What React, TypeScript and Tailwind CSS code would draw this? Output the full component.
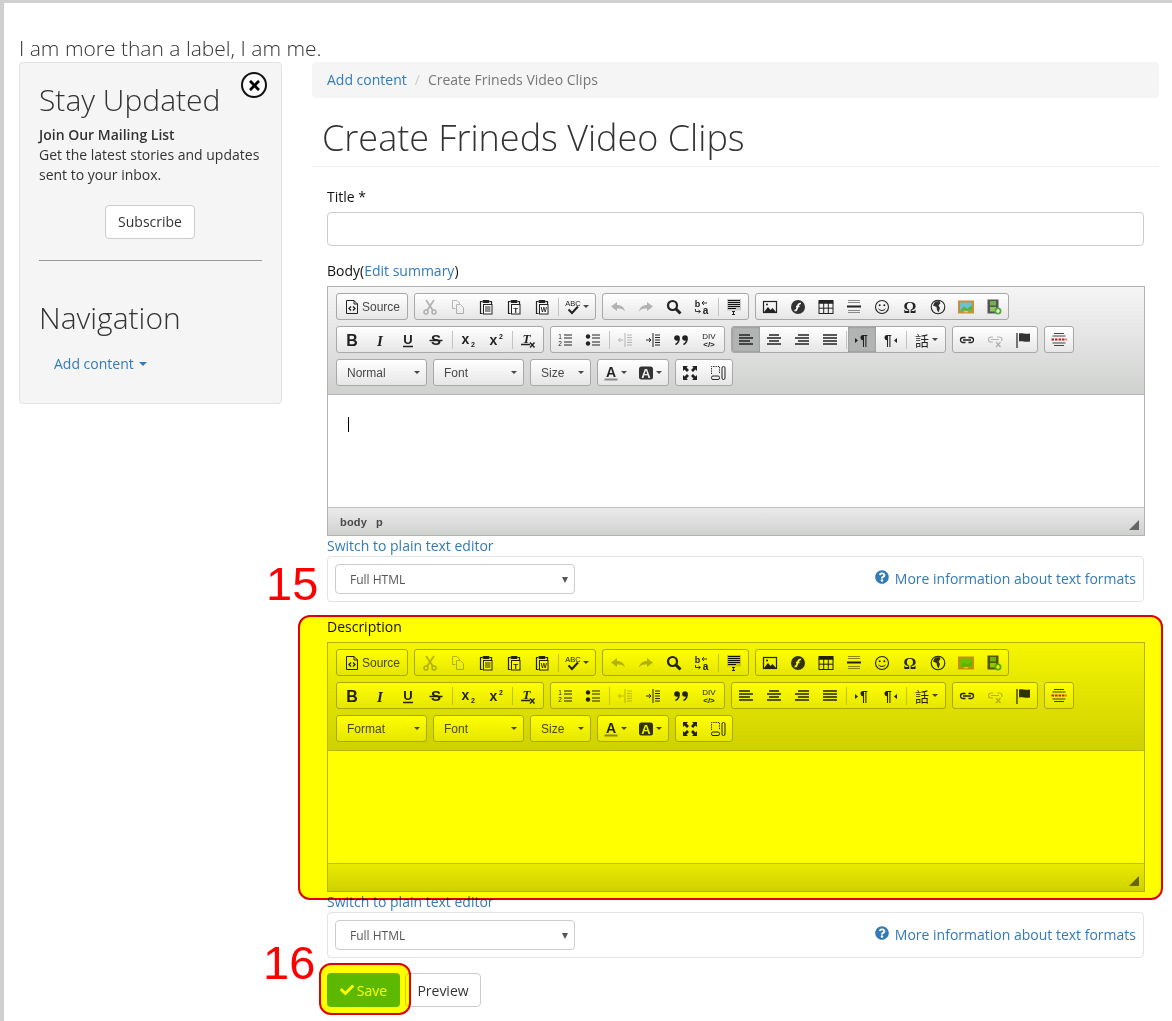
import type { ReactNode } from 'react';
import { FaCheck, FaQuestionCircle, FaTimes } from 'react-icons/fa';

const ARIAL = 'Liberation Sans, Arial, sans-serif';

function Svg({ children }: { children: ReactNode }) {
  return (
    <svg width="16" height="16" viewBox="0 0 16 16" fill="none" stroke="#222" strokeWidth="1" className="shrink-0 overflow-visible">
      {children}
    </svg>
  );
}

function Label({ x, y, size, children, weight = 700, family = ARIAL, italic = false }: { x: number; y: number; size: number; children: string; weight?: number; family?: string; italic?: boolean }) {
  return (
    <text x={x} y={y} fontSize={size} fontWeight={weight} fontFamily={family} fontStyle={italic ? 'italic' : 'normal'} fill="#222" stroke="none" textAnchor="middle">
      {children}
    </text>
  );
}

function Clipboard({ children }: { children?: ReactNode }) {
  return (
    <>
      <path d="M4.5 2.5h-2v12h2M11.5 2.5h2v2.5" strokeWidth="1.2" />
      <rect x="4.5" y="1" width="7" height="3" rx="1" fill="#222" stroke="none" />
      <rect x="5.5" y="5.5" width="8.5" height="9.5" fill="#fff" />
      {children}
    </>
  );
}

const icons: Record<string, ReactNode> = {
  source: (
    <>
      <path d="M2.5 1.5H10L13.5 5v9.5h-11z" />
      <path d="M10 1.5V5h3.5" />
      <path d="M7 7.5 5 9.5l2 2M9 7.5l2 2-2 2" strokeWidth="1.3" />
    </>
  ),
  cut: (
    <>
      <circle cx="4" cy="13" r="2" strokeWidth="1.5" />
      <circle cx="12" cy="13" r="2" strokeWidth="1.5" />
      <path d="M5 11.5 12 1M11 11.5 4 1" strokeWidth="1.8" />
    </>
  ),
  copy: (
    <>
      <path d="M2.5 1.5H7L9.5 4v1M2.5 1.5v8h3" />
      <path d="M6.5 5.5h4l3 3v6h-7z" />
    </>
  ),
  paste: (
    <Clipboard>
      <path d="M7 8h5.5M7 10h5.5M7 12h5.5" />
    </Clipboard>
  ),
  pasteText: (
    <Clipboard>
      <Label x={9.8} y={13.5} size={8}>T</Label>
    </Clipboard>
  ),
  pasteWord: (
    <Clipboard>
      <Label x={9.8} y={13} size={6.5}>W</Label>
    </Clipboard>
  ),
  spell: (
    <>
      <Label x={8} y={7} size={7.5} weight={400}>ABC</Label>
      <path d="M3.5 10.5 7 14l6-6.5" strokeWidth="2" />
    </>
  ),
  undo: <path d="M1 7.5 7 3v3c4 0 7 2 8 6.5C13 10 11 9.5 7 9.5V12z" fill="#222" stroke="none" />,
  redo: <path d="M15 7.5 9 3v3C5 6 2 8 1 12.5 3 10 5 9.5 9 9.5V12z" fill="#222" stroke="none" />,
  find: (
    <>
      <circle cx="6.5" cy="6.5" r="4.5" strokeWidth="2.2" />
      <path d="m10 10 4.5 4.5" strokeWidth="3" />
    </>
  ),
  replace: (
    <>
      <Label x={3.5} y={7.5} size={9}>b</Label>
      <Label x={11.5} y={15} size={10}>a</Label>
      <path d="M8 4h5M10 2 8 4l2 2M1.5 10v2.5H6M4.5 11l2 1.5-2 1.5" strokeWidth="0.9" />
    </>
  ),
  selectAll: (
    <>
      <rect x="1" y="0" width="14" height="11.5" fill="#c8c8c8" stroke="none" />
      <path d="M2 1.5h12M2 3.5h12M2 5.5h12M2 7.5h12M2 9.5h8" stroke="#111" />
      <path d="M6 12.5h3M7.5 12.5v3M6 15.5h3" />
    </>
  ),
  image: (
    <>
      <rect x="1.5" y="2.5" width="13" height="11" strokeWidth="1.2" />
      <path d="m2 13 4-5 2.5 3 2-2 3.5 4z" fill="#222" stroke="none" />
      <circle cx="5" cy="5.5" r="1" fill="#222" stroke="none" />
    </>
  ),
  flash: (
    <>
      <circle cx="8" cy="8" r="7" fill="#333" stroke="none" />
      <path d="M11 4.500c-2.500-.5-3 1-3.500 3.500S6.500 11.800 4.500 11.500M6 7.500h3.500" stroke="#fff" strokeWidth="1.6" />
    </>
  ),
  table: (
    <>
      <rect x="0.5" y="1" width="15" height="3.5" fill="#222" stroke="none" />
      <rect x="1" y="4" width="14" height="10.5" />
      <path d="M5.7 4v10.500M10.300 4v10.500M1 9.200h14" />
    </>
  ),
  hr: (
    <>
      <path d="M2 1.5h12M2 3.5h12M2 11.5h12M2 13.5h12" stroke="#888" />
      <path d="M1 7.5h14" strokeWidth="2" />
    </>
  ),
  smiley: (
    <>
      <circle cx="8" cy="8" r="6.5" strokeWidth="1.1" />
      <circle cx="5.7" cy="6.2" r="1" fill="#222" stroke="none" />
      <circle cx="10.3" cy="6.2" r="1" fill="#222" stroke="none" />
      <path d="M4.5 9.8c1.800 2.200 5.200 2.200 7 0" />
    </>
  ),
  omega: <Label x={8} y={14} size={16} family="Liberation Serif, serif">Ω</Label>,
  globe: (
    <>
      <circle cx="8" cy="8" r="6.8" strokeWidth="1.1" />
      <path d="M5 2.5 9.5 2l1 2-2 2.5L10 9l-1.5 4.5L7 11 6.5 8 3 6.5z" fill="#333" stroke="none" />
    </>
  ),
  gallery: (
    <>
      <rect x="0" y="1.5" width="16" height="13" fill="#c6913a" stroke="none" />
      <rect x="2" y="3.5" width="12" height="8" fill="#6cc0d8" stroke="none" />
      <path d="m2 11.5 4-4 3 2 5-3v5z" fill="#5cb33a" stroke="none" />
      <rect x="6" y="12.3" width="4" height="1" fill="#f4d690" stroke="none" />
    </>
  ),
  video: (
    <>
      <rect x="1.5" y="0.5" width="11" height="14" fill="#555" stroke="none" />
      <rect x="4" y="2" width="6" height="4.5" fill="#6fb24a" stroke="none" />
      <rect x="4" y="8" width="6" height="4.5" fill="#8ec65f" stroke="none" />
      <circle cx="12" cy="12" r="3.5" fill="#5da83c" stroke="none" />
      <path d="M10 12h4M12 10v4" stroke="#fff" strokeWidth="1.2" />
    </>
  ),
  bold: <Label x={8} y={13.5} size={16}>B</Label>,
  italic: <Label x={8} y={13.5} size={15} italic family="Liberation Serif, serif">I</Label>,
  underline: (
    <>
      <Label x={8} y={11.5} size={13}>U</Label>
      <path d="M3 14.5h10" strokeWidth="1.6" />
    </>
  ),
  strike: (
    <>
      <Label x={8} y={13} size={15}>S</Label>
      <path d="M1.5 8.5h13" strokeWidth="1.3" />
    </>
  ),
  sub: (
    <>
      <Label x={5.5} y={11.5} size={14}>x</Label>
      <Label x={13} y={15} size={7}>2</Label>
    </>
  ),
  sup: (
    <>
      <Label x={5.5} y={13} size={14}>x</Label>
      <Label x={13} y={6.5} size={7}>2</Label>
    </>
  ),
  removeFormat: (
    <>
      <Label x={6.5} y={10.5} size={13} italic family="Liberation Serif, serif">T</Label>
      <path d="M1 12.5h9" strokeWidth="1.5" />
      <path d="m10 10.5 4.5 5M14.5 10.5l-4.5 5" strokeWidth="1.4" />
    </>
  ),
  numList: (
    <>
      <Label x={3} y={7} size={6.5} weight={400}>1</Label>
      <Label x={3} y={14} size={6.5} weight={400}>2</Label>
      <path d="M7 3h8M7 6h8M7 10h8M7 13h8" strokeWidth="1.1" />
    </>
  ),
  bulletList: (
    <>
      <circle cx="3" cy="4.5" r="2.2" fill="#222" stroke="none" />
      <circle cx="3" cy="11.5" r="2.2" fill="#222" stroke="none" />
      <path d="M7 3h8M7 6h8M7 10h8M7 13h8" strokeWidth="1.1" />
    </>
  ),
  outdent: (
    <>
      <path d="M8 1v14" />
      <path d="M10 3h5M10 5.5h5M10 8h5M10 10.5h5M10 13h5" />
      <path d="M6.5 8h-5M3.5 6l-2 2 2 2" />
    </>
  ),
  indent: (
    <>
      <path d="M8 1v14" />
      <path d="M10 3h5M10 5.5h5M10 8h5M10 10.5h5M10 13h5" />
      <path d="M1 8h5M4 6l2 2-2 2" />
    </>
  ),
  quote: (
    <>
      <circle cx="4" cy="6" r="2.8" fill="#222" stroke="none" />
      <circle cx="12" cy="6" r="2.8" fill="#222" stroke="none" />
      <path d="M6 6.500c0 3-1.500 5-3.500 6M14 6.500c0 3-1.500 5-3.500 6" strokeWidth="1.6" />
    </>
  ),
  div: (
    <>
      <Label x={8} y={7} size={8} weight={400}>DIV</Label>
      <Label x={8} y={14.5} size={8}>{'</>'}</Label>
    </>
  ),
  alignLeft: <path d="M1 3h11M1 6h14M1 9h11M1 12h14" strokeWidth="1.7" />,
  alignCenter: <path d="M3 3h10M1 6h14M3 9h10M1 12h14" strokeWidth="1.7" />,
  alignRight: <path d="M4 3h11M1 6h14M4 9h11M1 12h14" strokeWidth="1.7" />,
  justify: <path d="M1 3h14M1 6h14M1 9h14M1 12h14" strokeWidth="1.7" />,
  ltr: (
    <>
      <path d="m1 6 3 2.5L1 11z" fill="#222" stroke="none" />
      <Label x={10} y={13} size={14}>¶</Label>
    </>
  ),
  rtl: (
    <>
      <Label x={6} y={13} size={14}>¶</Label>
      <path d="m15 6-3 2.5 3 2.5z" fill="#222" stroke="none" />
    </>
  ),
  language: <Label x={8} y={13.5} size={14} weight={400} family="Noto Sans CJK TC, sans-serif">話</Label>,
  link: <path d="M6.5 5.5H4a2.5 2.5 0 0 0 0 5h2.5M9.5 5.5H12a2.5 2.5 0 0 1 0 5H9.5M4 8h8" strokeWidth="1.3" />,
  unlink: (
    <>
      <path d="M6 5H4a2.5 2.5 0 0 0 0 5h2M10 5h2.5a2.5 2.5 0 0 1 2 4M4 7.5h8" strokeWidth="1.2" />
      <path d="m9 10 4.5 5M13.5 10 9 15" strokeWidth="1.3" />
    </>
  ),
  anchor: (
    <>
      <path d="M2 1v15" strokeWidth="1.2" />
      <path d="M4 1.5c3-1 6 1 11 0v8c-5 1-8-1-11 0z" fill="#333" stroke="none" />
    </>
  ),
  pageBreak: (
    <>
      <path d="M3 1.5h10M1.5 4h13M1.5 11h13M3 13.5h10" stroke="#444" />
      <path d="M.5 7.5h15" stroke="#c81e1e" strokeWidth="2" strokeDasharray="2.5 1" />
    </>
  ),
  textColor: (
    <>
      <Label x={8} y={11.5} size={14}>A</Label>
      <path d="M1.5 14.5h13" stroke="#888" strokeWidth="1.8" />
    </>
  ),
  bgColor: (
    <>
      <rect x="1" y="1.5" width="14" height="13" rx="2.5" fill="#333" stroke="none" />
      <text x="8" y="12.5" fontSize="13" fontWeight="700" fontFamily={ARIAL} fill="#eee" stroke="none" textAnchor="middle">A</text>
    </>
  ),
  maximize: (
    <path d="M1 1h5L4.5 2.5 7 5 5 7 2.5 4.500 1 6zM15 1v5l-1.500-1.500L11 7 9 5l2.500-2.500L10 1zM1 15v-5l1.500 1.500L5 9l2 2-2.500 2.500L6 15zM15 15h-5l1.500-1.500L9 11l2-2 2.500 2.500L15 10z" fill="#222" stroke="none" />
  ),
  showBlocks: (
    <>
      <path d="M1.5 9V1.5h8V9" strokeDasharray="1.3 1" />
      <rect x="1.5" y="11" width="8" height="3.5" rx="1.5" />
      <rect x="12" y="1.5" width="3" height="13" rx="1.5" />
    </>
  ),
};

function Arrow() {
  return <span className="inline-block w-0 h-0 border-x-[3px] border-t-[3px] border-x-transparent border-t-[#474747]" />;
}

interface BtnProps {
  icon: string;
  disabled?: boolean;
  pressed?: boolean;
  arrow?: boolean;
  width?: string;
}

function Btn({ icon, disabled = false, pressed = false, arrow = false, width = 'w-[28px]' }: BtnProps) {
  return (
    <div className={`${width} h-full flex items-center justify-center gap-[2px] ${pressed ? 'bg-[#b2b4b4] shadow-[inset_0_0_2px_#777]' : ''}`}>
      <span className={`flex ${disabled ? 'opacity-30' : ''}`}>
        <Svg>{icons[icon]}</Svg>
      </span>
      {arrow && <Arrow />}
    </div>
  );
}

function Sep() {
  return (
    <div className="w-[4px] h-full flex items-center justify-center">
      <div className="w-px h-[18px] bg-[#c4c4c4]" />
    </div>
  );
}

function Group({ children, className = 'px-px' }: { children: ReactNode; className?: string }) {
  return (
    <div className={`h-[27px] flex items-center overflow-hidden rounded-[3px] border border-[#a8a8a8] bg-linear-to-b from-white to-[#e6e6e6] ${className}`}>
      {children}
    </div>
  );
}

function Combo({ label, width }: { label: string; width: string }) {
  return (
    <div className={`${width} h-[27px] pl-[10px] pr-[6px] flex items-center justify-between rounded-[3px] border border-[#a8a8a8] bg-linear-to-b from-white to-[#e6e6e6] text-[12px] text-[#484848] font-['Liberation_Sans',Arial,sans-serif]`}>
      <span>{label}</span>
      <Arrow />
    </div>
  );
}

function Editor({ format, active = false }: { format: string; active?: boolean }) {
  return (
    <div className="w-[818px] h-[250px] flex flex-col border border-[#b2b2b2]">
      {/* Toolbar */}
      <div className="h-[108px] pt-[6px] pl-[8px] flex flex-col gap-[6px] border-b border-[#b6b6b6] bg-linear-to-b from-[#f5f5f5] to-[#cfd1cf]">
        <div className="flex gap-[6px]">
          <Group className="w-[72px] pl-[7px] gap-[2px]">
            <Svg>{icons.source}</Svg>
            <span className="text-[12px] text-[#484848] font-['Liberation_Sans',Arial,sans-serif]">Source</span>
          </Group>
          <Group>
            <Btn icon="cut" disabled />
            <Btn icon="copy" disabled />
            <Btn icon="paste" />
            <Btn icon="pasteText" />
            <Btn icon="pasteWord" />
            <Sep />
            <Btn icon="spell" arrow width="w-[34px]" />
          </Group>
          <Group>
            <Btn icon="undo" disabled />
            <Btn icon="redo" disabled />
            <Btn icon="find" />
            <Btn icon="replace" />
            <Sep />
            <Btn icon="selectAll" width="w-[27px]" />
          </Group>
          <Group className="px-0">
            <Btn icon="image" />
            <Btn icon="flash" />
            <Btn icon="table" />
            <Btn icon="hr" />
            <Btn icon="smiley" />
            <Btn icon="omega" />
            <Btn icon="globe" />
            <Btn icon="gallery" />
            <Btn icon="video" />
          </Group>
        </div>
        <div className="flex gap-[6px]">
          <Group>
            <Btn icon="bold" />
            <Btn icon="italic" />
            <Btn icon="underline" />
            <Btn icon="strike" />
            <Sep />
            <Btn icon="sub" />
            <Btn icon="sup" />
            <Sep />
            <Btn icon="removeFormat" />
          </Group>
          <Group className="pr-px">
            <Btn icon="numList" />
            <Btn icon="bulletList" />
            <Sep />
            <Btn icon="outdent" disabled />
            <Btn icon="indent" />
            <Btn icon="quote" />
            <Btn icon="div" />
          </Group>
          <Group className="pr-px">
            <Btn icon="alignLeft" pressed={active} />
            <Btn icon="alignCenter" />
            <Btn icon="alignRight" />
            <Btn icon="justify" />
            <Sep />
            <Btn icon="ltr" pressed={active} />
            <Btn icon="rtl" />
            <Sep />
            <Btn icon="language" arrow width="w-[36px]" />
          </Group>
          <Group className="px-0">
            <Btn icon="link" />
            <Btn icon="unlink" disabled />
            <Btn icon="anchor" />
          </Group>
          <Group className="px-0">
            <Btn icon="pageBreak" />
          </Group>
        </div>
        <div className="flex gap-[6px]">
          <Combo label={format} width="w-[91px]" />
          <Combo label="Font" width="w-[91px]" />
          <Combo label="Size" width="w-[61px]" />
          <Group className="w-[72px] px-0">
            <Btn icon="textColor" arrow width="w-[34px]" />
            <Btn icon="bgColor" arrow width="w-[36px]" />
          </Group>
          <Group className="w-[58px] px-0">
            <Btn icon="maximize" />
            <Btn icon="showBlocks" />
          </Group>
        </div>
      </div>

      {/* Editing area */}
      <div className="flex-1 bg-white pl-[20px] pt-[22px]">
        {active && <div className="w-px h-[15px] bg-black" />}
      </div>

      {/* Status bar */}
      <div className="relative h-[28px] pl-[12px] pt-px flex items-center gap-[9px] border-t border-[#bfbfbf] bg-linear-to-b from-[#ebebeb] to-[#cfd1cf] text-[11px] font-bold tracking-[0.2px] text-[#484848] font-['Liberation_Sans',Arial,sans-serif]">
        {active && (
          <>
            <span>body</span>
            <span>p</span>
          </>
        )}
        <div className="absolute right-[5px] bottom-[5px] w-0 h-0 border-l-[10px] border-b-[10px] border-l-transparent border-b-[#666]" />
      </div>
    </div>
  );
}

function FormatPanel() {
  return (
    <>
      <a className="block h-[20px] text-[14px] leading-[20px] text-[#337ab7]">Switch to plain text editor</a>
      <div className="w-[817px] h-[46px] px-[7px] flex items-center justify-between rounded-[4px] border border-[#e3e3e3] bg-white">
        <div className="w-[240px] h-[30px] pl-[14px] pr-[6px] pt-px flex items-center justify-between rounded-[4px] border border-[#ccc] bg-white text-[12px] text-[#555]">
          <span>Full HTML</span>
          <span className="w-0 h-0 border-x-[3.5px] border-t-[6px] border-x-transparent border-t-[#555]" />
        </div>
        <a className="pb-[2px] flex items-center gap-[6px] text-[14px] text-[#337ab7]">
          <FaQuestionCircle size={14} className="-mt-[2px]" />
          More information about text formats
        </a>
      </div>
    </>
  );
}

export default function App() {
  return (
    <div className="relative w-[1172px] h-[1021px] overflow-hidden bg-white border-t-[3px] border-l-[4px] border-[#d0d0d0] pl-[15px] pt-[31px] font-['Open_Sans',sans-serif] text-[14px] text-[#333]">
      <div className="h-[28px] text-[21px] leading-[28px] font-light whitespace-nowrap">I am more than a label, I am me.</div>

      <div className="flex gap-[30px]">
        {/* Sidebar */}
        <aside className="relative w-[263px] h-[342px] pl-[19px] pr-[19px] pt-[19px] rounded-[4px] border border-[#e3e3e3] bg-[#f5f5f5]">
          <div className="absolute left-[221px] top-[9px] w-[26px] h-[26px] flex items-center justify-center rounded-full border-2 border-[#111] bg-white text-black">
            <FaTimes size={15} />
          </div>
          <h2 className="h-[36px] text-[30px] leading-[36px] font-light">Stay Updated</h2>
          <div className="mt-[7px] leading-[20px] font-semibold">Join Our Mailing List</div>
          <p className="leading-[20px]">Get the latest stories and updates sent to your inbox.</p>
          <div className="mt-[20px] -ml-px flex justify-center">
            <div className="w-[90px] h-[34px] pb-px flex items-center justify-center rounded-[4px] border border-[#ccc] bg-white">Subscribe</div>
          </div>
          <hr className="mt-[21px] border-[#999]" />
          <h2 className="mt-[39px] h-[36px] text-[30px] leading-[36px] font-light">Navigation</h2>
          <a className="mt-[18px] ml-[15px] flex items-center gap-[5px] leading-[20px] text-[#337ab7]">
            Add content
            <span className="w-0 h-0 border-x-[4px] border-t-[4px] border-x-transparent border-t-[#337ab7]" />
          </a>
        </aside>

        {/* Main content */}
        <main className="w-[847px]">
          <div className="h-[36px] pl-[15px] pb-[2px] flex items-center gap-[8px] rounded-[4px] bg-[#f5f5f5]">
            <a className="text-[#337ab7]">Add content</a>
            <span className="text-[#ccc]">/</span>
            <span className="text-[#777]">Create Frineds Video Clips</span>
          </div>
          <h1 className="h-[69px] pl-[10px] pt-[12px] flex items-center border-b border-[#eee] text-[36px] font-light">Create Frineds Video Clips</h1>

          <form className="px-[15px] pt-[20px]">
            <label className="block h-[20px] leading-[20px] text-[#111]">Title *</label>
            <div className="mt-[5px] w-[817px] h-[34px] rounded-[4px] border border-[#ccc] bg-white" />

            <label className="mt-[15px] block h-[20px] leading-[20px] text-[#111] whitespace-nowrap">
              Body(<a className="text-[#337ab7]">Edit summary</a>)
            </label>
            <div className="mt-[5px]">
              <Editor format="Normal" active />
            </div>
            <FormatPanel />

            <label className="mt-[15px] block h-[20px] leading-[20px] text-[#111]">Description</label>
            <div className="mt-[5px]">
              <Editor format="Format" />
            </div>
            <FormatPanel />

            <div className="mt-[15px] flex gap-[5px]">
              <button type="button" className="w-[73px] h-[34px] flex items-center justify-center gap-[3px] rounded-[4px] bg-[#5cb85c] text-white">
                <FaCheck size={14} />
                Save
              </button>
              <button type="button" className="w-[76px] h-[34px] rounded-[4px] border border-[#ccc] bg-white">Preview</button>
            </div>
          </form>
        </main>
      </div>

      {/* Annotations drawn over the page */}
      <div className="absolute left-[294px] top-[612px] w-[865px] h-[285px] rounded-[12px] border-2 border-[#e00000] bg-[#ffff00] mix-blend-multiply" />
      <div className="absolute left-[315px] top-[960px] w-[92px] h-[52px] rounded-[12px] border-2 border-[#e00000] bg-[#ffff00] mix-blend-multiply" />
      <div className="absolute left-[262px] top-[553px] text-[47px] leading-[56px] text-[#ff0000] font-['Liberation_Sans',Arial,sans-serif]">15</div>
      <div className="absolute left-[259px] top-[932px] text-[47px] leading-[56px] text-[#ff0000] font-['Liberation_Sans',Arial,sans-serif]">16</div>
    </div>
  );
}
